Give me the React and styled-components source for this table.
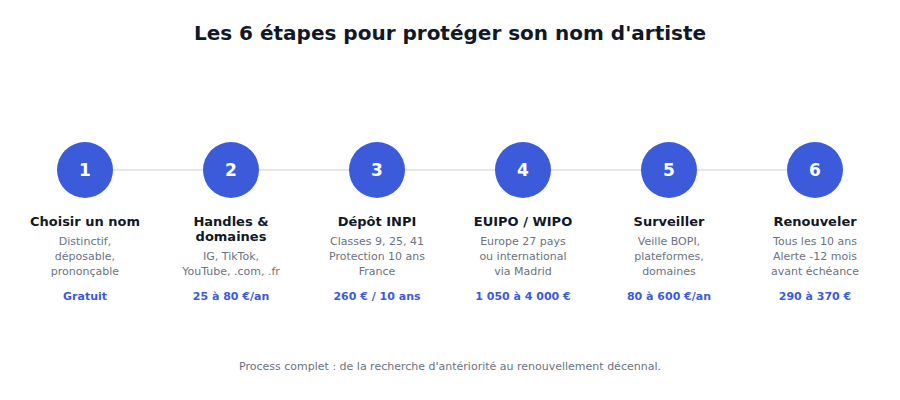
import React from 'react';
import styled, { createGlobalStyle } from 'styled-components';

const GlobalStyle = createGlobalStyle`
  body {
    margin: 0;
    background: #ffffff;
    font-family: "DejaVu Sans", "Liberation Sans", sans-serif;
  }
`;

const Page = styled.div`
  width: 900px;
  height: 400px;
  display: flex;
  flex-direction: column;
  align-items: center;
  box-sizing: border-box;
  padding-top: 21px;
`;

const Title = styled.h1`
  margin: 0;
  font-size: 20px;
  line-height: 24px;
  font-weight: 700;
  color: #111827;
`;

const Steps = styled.div`
  position: relative;
  display: grid;
  grid-template-columns: repeat(6, 146px);
  margin-top: 97px;

  &::before {
    content: '';
    position: absolute;
    top: 27px;
    left: 73px;
    right: 73px;
    height: 2px;
    background: #e5e7eb;
  }
`;

const Step = styled.div`
  display: flex;
  flex-direction: column;
  align-items: center;
  text-align: center;
`;

const Circle = styled.div`
  position: relative;
  width: 56px;
  height: 56px;
  border-radius: 50%;
  background: #3b5bdb;
  color: #ffffff;
  display: flex;
  align-items: center;
  justify-content: center;
  font-size: 17px;
  font-weight: 700;
`;

const StepTitle = styled.div`
  margin-top: 16px;
  font-size: 13px;
  line-height: 15px;
  font-weight: 700;
  color: #111827;
`;

const Desc = styled.div`
  margin-top: 5px;
  font-size: 11px;
  line-height: 15px;
  color: #6b7280;
`;

const Price = styled.div`
  margin-top: 10px;
  font-size: 11px;
  line-height: 15px;
  font-weight: 700;
  color: #3b5bdb;
`;

const Footer = styled.p`
  margin: 55px 0 0;
  font-size: 11px;
  line-height: 15px;
  color: #6b7280;
`;

const steps = [
  { title: ['Choisir un nom'], desc: ['Distinctif,', 'déposable,', 'prononçable'], price: 'Gratuit' },
  { title: ['Handles &', 'domaines'], desc: ['IG, TikTok,', 'YouTube, .com, .fr'], price: '25 à 80 €/an' },
  { title: ['Dépôt INPI'], desc: ['Classes 9, 25, 41', 'Protection 10 ans', 'France'], price: '260 € / 10 ans' },
  { title: ['EUIPO / WIPO'], desc: ['Europe 27 pays', 'ou international', 'via Madrid'], price: '1 050 à 4 000 €' },
  { title: ['Surveiller'], desc: ['Veille BOPI,', 'plateformes,', 'domaines'], price: '80 à 600 €/an' },
  { title: ['Renouveler'], desc: ['Tous les 10 ans', 'Alerte -12 mois', 'avant échéance'], price: '290 à 370 €' },
];

const lines = (arr) => arr.map((l, i) => <div key={i}>{l}</div>);

export default function App() {
  return (
    <>
      <GlobalStyle />
      <Page>
        <Title>Les 6 étapes pour protéger son nom d'artiste</Title>
        <Steps>
          {steps.map((s, i) => (
            <Step key={i}>
              <Circle>{i + 1}</Circle>
              <StepTitle>{lines(s.title)}</StepTitle>
              <Desc>{lines(s.desc)}</Desc>
              <Price>{s.price}</Price>
            </Step>
          ))}
        </Steps>
        <Footer>Process complet : de la recherche d'antériorité au renouvellement décennal.</Footer>
      </Page>
    </>
  );
}
